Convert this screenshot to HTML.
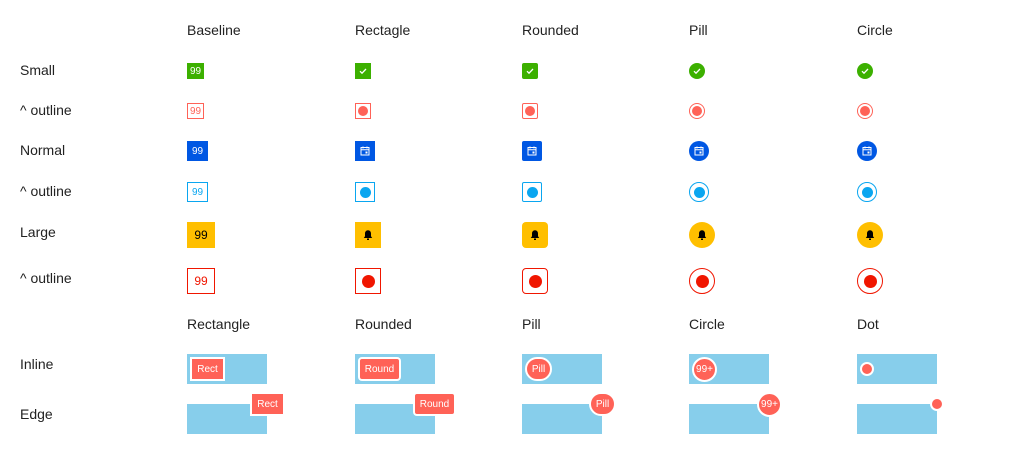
<!DOCTYPE html>
<html><head><style>
body{margin:0;width:1024px;height:454px;background:#fff;font-family:"Liberation Sans",sans-serif;color:#222;position:relative;overflow:hidden}
.t{position:absolute;font-size:14px;line-height:16px}
.b{position:absolute;box-sizing:border-box;display:flex;align-items:center;justify-content:center;color:#fff;font-size:10px}
.dot{border-radius:50%}
.box{position:absolute;width:80px;height:30px;background:#87ceeb}
.g{position:absolute;box-sizing:border-box;background:#ff6257;border:2px solid #fff;color:#fff;font-size:10px;display:flex;align-items:center;justify-content:center}
svg{display:block}
</style></head><body>
<div class="t" style="left:187px;top:22px">Baseline</div>
<div class="t" style="left:355px;top:22px">Rectagle</div>
<div class="t" style="left:522px;top:22px">Rounded</div>
<div class="t" style="left:689px;top:22px">Pill</div>
<div class="t" style="left:857px;top:22px">Circle</div>
<div class="t" style="left:20px;top:62px">Small</div>
<div class="t" style="left:20px;top:102px">^ outline</div>
<div class="t" style="left:20px;top:142px">Normal</div>
<div class="t" style="left:20px;top:183px">^ outline</div>
<div class="t" style="left:20px;top:224px">Large</div>
<div class="t" style="left:20px;top:270px">^ outline</div>
<div class="t" style="left:187px;top:316px">Rectangle</div>
<div class="t" style="left:355px;top:316px">Rounded</div>
<div class="t" style="left:522px;top:316px">Pill</div>
<div class="t" style="left:689px;top:316px">Circle</div>
<div class="t" style="left:857px;top:316px">Dot</div>
<div class="t" style="left:20px;top:356px">Inline</div>
<div class="t" style="left:20px;top:406px">Edge</div>

<!-- baseline column -->
<div class="b" style="left:187px;top:63px;width:17px;height:16px;background:#3cb000">99</div>
<div class="b" style="left:187px;top:103px;width:17px;height:16px;border:1px solid #ff6257;color:#ff6257">99</div>
<div class="b" style="left:187px;top:141px;width:21px;height:20px;background:#0057e3">99</div>
<div class="b" style="left:187px;top:182px;width:21px;height:20px;border:1px solid #0aa6f0;color:#0aa6f0">99</div>
<div class="b" style="left:187px;top:222px;width:28px;height:26px;background:#ffbf00;color:#000;font-size:12px">99</div>
<div class="b" style="left:187px;top:268px;width:28px;height:26px;border:1px solid #f01600;color:#f01600;font-size:12px">99</div>

<!-- columns: rect 355, rounded 522 r=2, pill 689, circle 857 -->
<script>
var cols=[[355,0],[522,3],[689,50],[857,50]];
var chk='<svg width="10" height="10" viewBox="0 0 10 10"><path d="M2 5.2l2 2 4-4.2" stroke="#fff" stroke-width="1.3" fill="none"/></svg>';
var cal='<svg width="10" height="10" viewBox="0 0 10 10"><rect x="1" y="1.5" width="8" height="7.5" stroke="#fff" fill="none"/><path d="M1 3.8h8M3 0.5v2M7 0.5v2" stroke="#fff"/><rect x="5.5" y="5.5" width="2" height="2" fill="#fff"/></svg>';
var bell='<svg width="12" height="12" viewBox="0 0 12 12"><path d="M6 1.3c-1.9 0-3 1.5-3 3.3v2.6L1.8 9h8.4L9 7.2V4.6C9 2.8 7.9 1.3 6 1.3z" fill="#000"/><rect x="5" y="9.5" width="2" height="1.5" fill="#000"/></svg>';
var h='';
cols.forEach(function(c){
 var x=c[0],r=c[1]+'px';
 function rr(s){return c[1]==50?'50%':(c[1]==0?'0':(s>22?'4px':'2px'));}
 h+='<div class="b" style="left:'+x+'px;top:63px;width:16px;height:16px;border-radius:'+rr(16)+';background:#3cb000">'+chk+'</div>';
 h+='<div class="b" style="left:'+x+'px;top:103px;width:16px;height:16px;border-radius:'+rr(16)+';border:1px solid #ff6257"><div style="width:10px;height:10px;border-radius:50%;background:#ff6257"></div></div>';
 h+='<div class="b" style="left:'+x+'px;top:141px;width:20px;height:20px;border-radius:'+rr(20)+';background:#0057e3">'+cal+'</div>';
 h+='<div class="b" style="left:'+x+'px;top:182px;width:20px;height:20px;border-radius:'+rr(20)+';border:1px solid #0aa6f0"><div style="width:11px;height:11px;border-radius:50%;background:#0aa6f0"></div></div>';
 h+='<div class="b" style="left:'+x+'px;top:222px;width:26px;height:26px;border-radius:'+rr(26)+';background:#ffbf00">'+bell+'</div>';
 h+='<div class="b" style="left:'+x+'px;top:268px;width:26px;height:26px;border-radius:'+rr(26)+';border:1px solid #f01600"><div style="width:13px;height:13px;border-radius:50%;background:#f01600"></div></div>';
});
document.write(h);
</script>

<!-- bottom boxes -->
<div class="box" style="left:187px;top:354px"></div>
<div class="box" style="left:355px;top:354px"></div>
<div class="box" style="left:522px;top:354px"></div>
<div class="box" style="left:689px;top:354px"></div>
<div class="box" style="left:857px;top:354px"></div>
<div class="box" style="left:187px;top:404px"></div>
<div class="box" style="left:355px;top:404px"></div>
<div class="box" style="left:522px;top:404px"></div>
<div class="box" style="left:689px;top:404px"></div>
<div class="box" style="left:857px;top:404px"></div>

<div class="g" style="left:190px;top:357px;width:35px;height:24px">Rect</div>
<div class="g" style="left:250px;top:392px;width:35px;height:24px">Rect</div>
<div class="g" style="left:358px;top:357px;width:43px;height:24px;border-radius:4px">Round</div>
<div class="g" style="left:413px;top:392px;width:43px;height:24px;border-radius:4px">Round</div>
<div class="g" style="left:525px;top:357px;width:27px;height:24px;border-radius:12px">Pill</div>
<div class="g" style="left:589px;top:392px;width:27px;height:24px;border-radius:12px">Pill</div>
<div class="g" style="left:692px;top:357px;width:25px;height:25px;border-radius:50%">99+</div>
<div class="g" style="left:757px;top:392px;width:25px;height:25px;border-radius:50%">99+</div>
<div class="g" style="left:860px;top:362px;width:14px;height:14px;border-radius:50%"></div>
<div class="g" style="left:930px;top:397px;width:14px;height:14px;border-radius:50%"></div>
</body></html>
